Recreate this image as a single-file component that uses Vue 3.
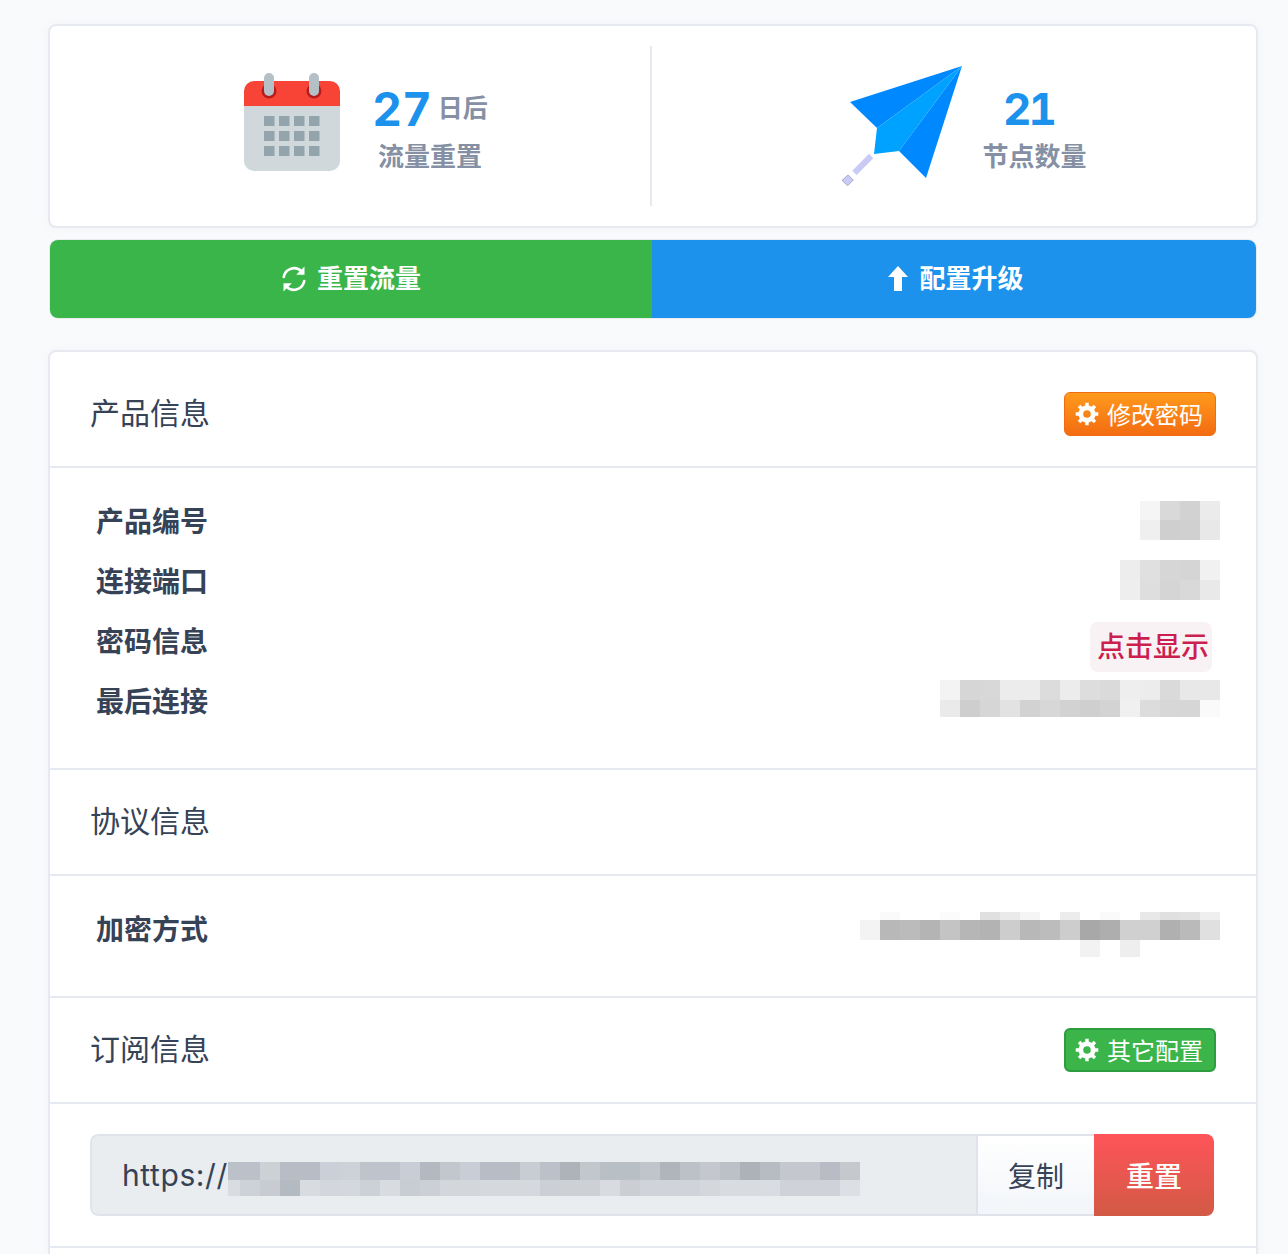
<template>
  <div class="page">
    <div class="card stats">
      <div class="stat">
        <svg class="cal" width="96" height="100" viewBox="0 0 96 100">
          <path d="M0 34V89a10 10 0 0 0 10 10H86a10 10 0 0 0 10-10V34z" fill="#d0d8dc" />
          <path d="M0 34V19a10 10 0 0 1 10-10H86a10 10 0 0 1 10 10V34z" fill="#f84437" />
          <circle cx="25" cy="19" r="7.5" fill="#b71c1c" />
          <circle cx="70" cy="19" r="7.5" fill="#b71c1c" />
          <rect x="20" y="1" width="10" height="23" rx="5" fill="#b4bfc6" />
          <rect x="65" y="1" width="10" height="23" rx="5" fill="#b4bfc6" />
          <g fill="#93a4ad">
            <template v-for="y in [44, 59, 74]" :key="y">
              <rect v-for="x in [20, 35, 50, 65]" :key="x" :x="x" :y="y" width="10.5" height="10" />
            </template>
          </g>
        </svg>
        <div class="stat-text">
          <div class="stat-top"><span class="num">27</span><span class="unit">日后</span></div>
          <div class="stat-label">流量重置</div>
        </div>
      </div>
      <div class="stat stat-right">
        <svg class="plane" width="122" height="122" viewBox="0 0 122 122">
          <path d="M9 37 121 1 36 63z" fill="#0088ff" />
          <path d="M121 1 85 113 58 86z" fill="#0088ff" />
          <path d="M121 1 58 86 33 89 36 63z" fill="#00a2ff" />
          <path d="M28 88.7 32.3 93.3 15.7 110 11.3 105.7z" fill="#c9cbf6" />
          <path d="M7 110 12.3 115 6.7 120.7 1 115.3z" fill="#c9cbf6" stroke="#8f93b5" stroke-width=".7" />
        </svg>
        <div class="stat-text stat-text-right">
          <div class="stat-top"><span class="num">21</span></div>
          <div class="stat-label">节点数量</div>
        </div>
      </div>
    </div>

    <div class="actions">
      <a class="action green">
        <svg width="26" height="26" viewBox="0 0 26 26">
          <g fill="none" stroke="#fff" stroke-width="2.6" stroke-linecap="round">
            <path d="M2.8 11A10.4 10.4 0 0 1 20.5 5.4" />
            <path d="M23.2 15A10.4 10.4 0 0 1 5.5 20.6" />
          </g>
          <path d="M23.5.5V8.8H15.2z" fill="#fff" />
          <path d="M2.5 25.5V17.2H10.8z" fill="#fff" />
        </svg>
        重置流量
      </a>
      <a class="action blue">
        <svg width="20" height="26" viewBox="0 0 20 26"><path d="M10 0 20 11H14V25H6V11H0z" fill="#fff" /></svg>
        配置升级
      </a>
    </div>

    <div class="card info">
      <div class="head head-first">
        <span class="title">产品信息</span>
        <a class="tag orange"><svg class="gear" width="24" height="24" viewBox="0 0 24 24"><path :d="gearPath" fill="#fff" fill-rule="evenodd" /></svg>修改密码</a>
      </div>
      <div class="body rows">
        <div v-for="row in productRows" :key="row.label" class="row">
          <span class="label">{{ row.label }}</span>
          <code v-if="row.reveal" class="reveal">点击显示</code>
          <div v-else class="mosaic">
            <div v-for="(line, i) in row.mosaic" :key="i" class="mosaic-line" :style="{ height: line.h + 'px' }">
              <i v-for="(c, j) in line.cells" :key="j" :style="{ width: (c[1] || 20) + 'px', background: c[0] }"></i>
            </div>
          </div>
        </div>
      </div>

      <div class="head"><span class="title">协议信息</span></div>
      <div class="body cipher">
        <div class="row row-cipher">
          <span class="label">加密方式</span>
          <div class="mosaic">
            <div v-for="(line, i) in cipherMosaic" :key="i" class="mosaic-line" :style="{ height: line.h + 'px' }">
              <i v-for="(c, j) in line.cells" :key="j" :style="{ width: (c[1] || 20) + 'px', background: c[0] }"></i>
            </div>
          </div>
        </div>
      </div>

      <div class="head">
        <span class="title">订阅信息</span>
        <a class="tag green-tag"><svg class="gear" width="24" height="24" viewBox="0 0 24 24"><path :d="gearPath" fill="#fff" fill-rule="evenodd" /></svg>其它配置</a>
      </div>
      <div class="body sub">
        <div class="input-group">
          <div class="url">
            <span class="url-text">https://</span>
            <div class="mosaic url-mosaic">
              <div v-for="(line, i) in urlMosaic" :key="i" class="mosaic-line" :style="{ height: line.h + 'px' }">
                <i v-for="(c, j) in line.cells" :key="j" :style="{ width: c[1] + 'px', background: c[0] }"></i>
              </div>
            </div>
          </div>
          <a class="copy">复制</a>
          <a class="reset">重置</a>
        </div>
      </div>
      <div class="foot"></div>
    </div>
  </div>
</template>

<script setup>
// gear with 8 teeth, same shape on both small buttons
function makeGear() {
  let d = ''
  const teeth = 8
  for (let i = 0; i < teeth; i++) {
    const a = (i / teeth) * Math.PI * 2
    const pts = [[-0.2, 8.6], [-0.15, 11.4], [0.15, 11.4], [0.2, 8.6]]
    for (const [da, r] of pts) {
      const x = 12 + r * Math.sin(a + da)
      const y = 12 - r * Math.cos(a + da)
      d += (d ? 'L' : 'M') + x.toFixed(2) + ' ' + y.toFixed(2)
    }
  }
  return d + 'Z M12 8.2a3.8 3.8 0 1 0 0 7.6a3.8 3.8 0 1 0 0-7.6Z'
}
const gearPath = makeGear()

const grey = (list) => list.map((v) => ['#' + v + v + v])

const productRows = [
  { label: '产品编号', mosaic: [
    { h: 19, cells: grey(['f5', 'd9', 'd2', 'eb']) },
    { h: 20, cells: grey(['ef', 'cf', 'd0', 'e8']) },
  ] },
  { label: '连接端口', mosaic: [
    { h: 20, cells: grey(['ed', 'e0', 'd6', 'd5', 'f1']) },
    { h: 20, cells: grey(['ee', 'de', 'd5', 'd9', 'e9']) },
  ] },
  { label: '密码信息', reveal: true },
  { label: '最后连接', mosaic: [
    { h: 20, cells: grey(['f3', 'd6', 'd8', 'ec', 'ec', 'dc', 'ec', 'dd', 'da', 'ee', 'ec', 'da', 'e8', 'e8']) },
    { h: 17, cells: grey(['ea', 'ce', 'd6', 'e2', 'd2', 'd7', 'd2', 'cf', 'd3', 'f0', 'dc', 'd7', 'd6', 'fa']) },
  ] },
]

const cipherMosaic = [
  { h: 8, cells: grey(['ff', 'fa', 'ff', 'ff', 'fb', 'ff', 'e0', 'ea', 'f5', 'ff', 'ec', 'ff', 'fa', 'ff', 'e8', 'e0', 'e2', 'ef']) },
  { h: 20, cells: grey(['f3', 'b8', 'bb', 'b4', 'c4', 'b6', 'b3', 'cd', 'b8', 'bc', 'cd', 'a8', 'ae', 'd0', 'd0', 'b0', 'ba', 'e0']) },
  { h: 17, cells: grey(['ff', 'ff', 'ff', 'ff', 'ff', 'ff', 'ff', 'ff', 'ff', 'ff', 'ff', 'f2', 'ff', 'ee', 'ff', 'ff', 'ff', 'ff']) },
]

const urlMosaic = [
  { h: 18, cells: [['#bcc0c8', 32], ['#ccd1d6', 20], ['#b8bcc4', 40], ['#cbcfd7', 20], ['#cdd1d8', 20], ['#bfc3cb', 40], ['#c9cdd5', 20], ['#b4b9c1', 20], ['#c2c6cd', 20], ['#c9cdd5', 20], ['#b8bcc4', 40], ['#c8ccd3', 20], ['#bcc0c8', 20], ['#aeb3ba', 20], ['#c2c7cc', 20], ['#b8bfc5', 40], ['#c0c5cb', 20], ['#b0b5bc', 20], ['#bcc0c7', 20], ['#c4c8ce', 20], ['#bcc0c7', 20], ['#acb2b8', 20], ['#b7bcc2', 20], ['#c4c7ce', 40], ['#b9bcc4', 20], ['#c5c9cd', 20]] },
  { h: 16, cells: [['#d9dce1', 12], ['#cdd1d8', 20], ['#c8ccd2', 20], ['#b4bac2', 20], ['#d8dbe0', 20], ['#d3d6dc', 20], ['#d4d7dc', 20], ['#ccd0d7', 20], ['#d8dbe0', 20], ['#c8ccd3', 20], ['#ccd0d6', 20], ['#d3d6da', 40], ['#d5d8dc', 40], ['#d5d8dd', 20], ['#ccd0d6', 20], ['#cdd1d5', 40], ['#d8dbe0', 20], ['#cbcfd3', 20], ['#d0d3d9', 60], ['#d4d7db', 20], ['#d8dbe0', 40], ['#d9dce0', 20], ['#cfd2d8', 60], ['#dcdfe3', 20]] },
]
</script>

<style>
html, body {
  background: #f9fafc;
}
</style>

<style scoped>
.page {
  height: 1254px;
  overflow: hidden;
  box-sizing: border-box;
  padding: 24px 30px 0 48px;
  font-family: Inter, "Noto Sans CJK SC", sans-serif;
  color: #364256;
}

.card {
  background: #fff;
  border: 2px solid #e6e9ef;
  border-radius: 8px;
  box-shadow: 0 0 8px rgba(120, 130, 170, 0.06);
}

.stats {
  display: flex;
  height: 204px;
  box-sizing: border-box;
  padding: 20px 0;
}

.stat {
  flex: none;
  width: 602px;
  box-sizing: border-box;
  display: flex;
  align-items: center;
  justify-content: center;
  gap: 32px;
  padding-left: 32px;
  border-right: 2px solid #e6e9ef;
}

.cal {
  margin-top: -8px;
}

.stat-right {
  flex: 1;
  width: auto;
  border-right: 0;
  padding-left: 20px;
  gap: 19px;
}

.stat-text {
  display: flex;
  flex-direction: column;
  align-items: center;
  gap: 6px;
  margin-top: 8px;
}

.stat-top {
  display: flex;
  align-items: center;
  gap: 6px;
  height: 48px;
}

.num {
  font-size: 46px;
  font-weight: 700;
  font-feature-settings: "tnum";
  color: #1c92ec;
  line-height: 48px;
}

.stat-text-right .num {
  font-size: 44px;
  letter-spacing: -3px;
  margin-right: 12px;
}

.unit {
  font-size: 25px;
  font-weight: 700;
  color: #8590a4;
  line-height: 36px;
  margin-bottom: 3px;
}

.stat-label {
  font-size: 26px;
  font-weight: 700;
  color: #8590a4;
  line-height: 36px;
}

.actions {
  display: flex;
  height: 78px;
  margin: 12px 2px 0;
  border-radius: 8px;
  overflow: hidden;
  box-shadow: 0 0 0 1px #e8ebf1;
}

.action {
  flex: 1;
  display: flex;
  align-items: center;
  justify-content: center;
  gap: 10px;
  padding-bottom: 6px;
  color: #fff;
  font-size: 26px;
  font-weight: 700;
}

.action svg {
  margin-top: 6px;
}

.green {
  flex: none;
  width: 602px;
  background: #39b54a;
}

.blue {
  gap: 11px;
  padding-left: 4px;
  background: #1c92ec;
}

.info {
  margin-top: 32px;
}

.head {
  display: flex;
  align-items: center;
  justify-content: space-between;
  height: 104px;
  padding: 0 40px;
  border-bottom: 2px solid #e6e9ef;
}

.head-first {
  padding-top: 10px;
}

.title {
  font-size: 30px;
  font-weight: 400;
  line-height: 40px;
  padding-bottom: 2px;
}

.tag {
  display: flex;
  align-items: center;
  gap: 8px;
  height: 44px;
  box-sizing: border-box;
  padding: 0 12px 2px 10px;
  border-radius: 6px;
  color: #fff;
  font-size: 24px;
}

.gear {
  margin-top: 2px;
}

.orange {
  background: linear-gradient(#ff9a1c, #f36c12);
  border: 1px solid #f16c10;
}

.green-tag {
  padding: 0 11px 2px 9px;
  background: #3bb54a;
  border: 2px solid #2c9c3e;
}

.body {
  border-bottom: 2px solid #e6e9ef;
}

.rows {
  padding: 22px 36px 38px 46px;
  display: flex;
  flex-direction: column;
}

.row {
  display: flex;
  align-items: center;
  justify-content: space-between;
  height: 60px;
}

.rows .label {
  padding-top: 4px;
}

.rows .row:last-child .mosaic {
  margin-bottom: 4px;
}

.label {
  font-size: 28px;
  font-weight: 700;
  line-height: 40px;
}

.mosaic {
  display: flex;
  flex-direction: column;
}

.mosaic-line {
  display: flex;
}

.mosaic-line i {
  display: block;
  flex: none;
}

.reveal {
  font-family: Inter, "Noto Sans CJK SC", sans-serif;
  font-size: 28px;
  font-weight: 500;
  line-height: 50px;
  color: #cb1f50;
  background: #f9f2f4;
  border-radius: 8px;
  padding: 0 3px 0 7px;
  margin-right: 8px;
  margin-top: 14px;
}

.cipher {
  padding: 36px 36px 40px 46px;
}

.row-cipher {
  height: 44px;
}

.row-cipher .label {
  padding-bottom: 8px;
}

.sub {
  padding: 30px 42px 30px 40px;
}

.input-group {
  display: flex;
  height: 82px;
  box-sizing: border-box;
  border-radius: 8px;
  overflow: hidden;
}

.url {
  flex: none;
  width: 888px;
  box-sizing: border-box;
  display: flex;
  align-items: center;
  padding-left: 30px;
  background: #e9edf0;
  border: 2px solid #e0e4ea;
  border-radius: 8px 0 0 8px;
  font-size: 30px;
}

.url-text {
  letter-spacing: 0.6px;
}

.url-mosaic {
  margin-top: 8px;
}

.copy {
  flex: none;
  width: 116px;
  box-sizing: border-box;
  display: flex;
  align-items: center;
  justify-content: center;
  font-size: 28px;
  background: linear-gradient(#fff, #f2f5f9);
  border: solid #e0e4ea;
  border-width: 2px 0;
}

.reset {
  flex: none;
  width: 120px;
  display: flex;
  align-items: center;
  justify-content: center;
  font-size: 28px;
  font-weight: 500;
  color: #fff;
  background: linear-gradient(#ff5459, #d25a45);
}

.foot {
  height: 20px;
}
</style>
